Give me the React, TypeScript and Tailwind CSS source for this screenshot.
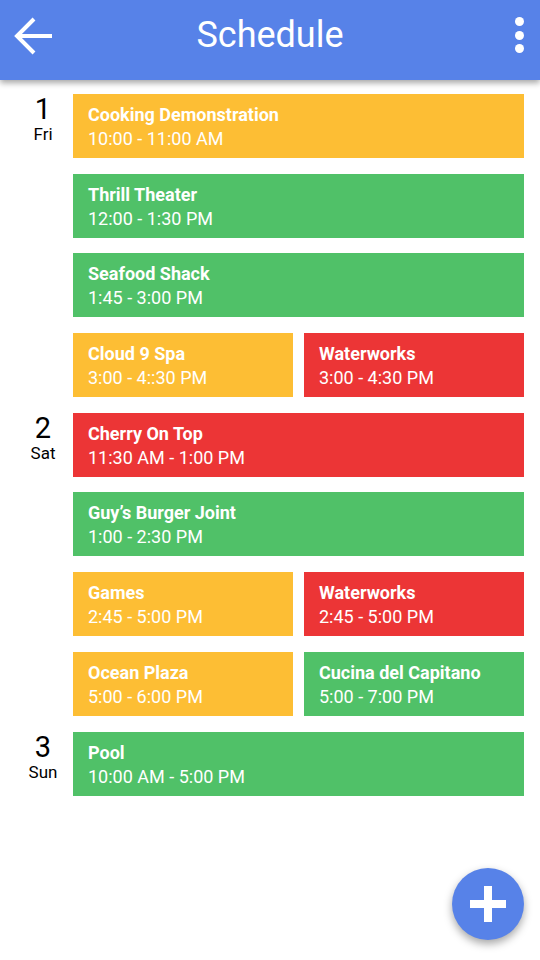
type Ev = { title: string; time: string; color: string }

const Y = 'bg-[#fdbe34]'
const G = 'bg-[#50c168]'
const R = 'bg-[#ec3536]'

const days: { num: string; name: string; rows: Ev[][] }[] = [
  {
    num: '1',
    name: 'Fri',
    rows: [
      [{ title: 'Cooking Demonstration', time: '10:00 - 11:00 AM', color: Y }],
      [{ title: 'Thrill Theater', time: '12:00 - 1:30 PM', color: G }],
      [{ title: 'Seafood Shack', time: '1:45 - 3:00 PM', color: G }],
      [
        { title: 'Cloud 9 Spa', time: '3:00 - 4::30 PM', color: Y },
        { title: 'Waterworks', time: '3:00 - 4:30 PM', color: R },
      ],
    ],
  },
  {
    num: '2',
    name: 'Sat',
    rows: [
      [{ title: 'Cherry On Top', time: '11:30 AM - 1:00 PM', color: R }],
      [{ title: 'Guy’s Burger Joint', time: '1:00 - 2:30 PM', color: G }],
      [
        { title: 'Games', time: '2:45 - 5:00 PM', color: Y },
        { title: 'Waterworks', time: '2:45 - 5:00 PM', color: R },
      ],
      [
        { title: 'Ocean Plaza', time: '5:00 - 6:00 PM', color: Y },
        { title: 'Cucina del Capitano', time: '5:00 - 7:00 PM', color: G },
      ],
    ],
  },
  {
    num: '3',
    name: 'Sun',
    rows: [[{ title: 'Pool', time: '10:00 AM - 5:00 PM', color: G }]],
  },
]

const Card = ({ title, time, color }: Ev) => (
  <div className={`${color} h-16 pl-[15px] pt-[9px] text-white text-[18px] leading-6`}>
    <div className="font-bold">{title}</div>
    <div>{time}</div>
  </div>
)

export default function App() {
  return (
    <div className="relative w-[540px] h-[960px] bg-white overflow-hidden" style={{ fontFamily: 'Roboto, "Noto Sans", sans-serif' }}>
      <header className="relative z-10 h-20 bg-[#5782e8] shadow-[0_3px_6px_rgba(0,0,0,0.35)] flex items-center justify-between pb-[10px] pl-[14px] pr-[16px]">
        <svg width="40" height="40" viewBox="0 0 40 40" className="mt-[2px]">
          <path d="M38 20H4M20 3L3 20l17 17" stroke="white" strokeWidth="4" fill="none" />
        </svg>
        <h1 className="absolute left-0 right-0 top-[11px] text-center text-white text-[36px] leading-[48px]">Schedule</h1>
        <div className="flex flex-col gap-[4.5px]">
          <span className="w-[9px] h-[9px] rounded-full bg-white" />
          <span className="w-[9px] h-[9px] rounded-full bg-white" />
          <span className="w-[9px] h-[9px] rounded-full bg-white" />
        </div>
      </header>

      <main className="pt-[14px] flex flex-col gap-[16px]">
        {days.map((d) => (
          <div key={d.num} className="flex">
            <div className="w-[73px] pl-[13px] flex flex-col items-center text-black">
              <span className="w-[60px] text-center text-[29px] leading-[30px]">{d.num}</span>
              <span className="w-[60px] text-center text-[17px] leading-[20px]">{d.name}</span>
            </div>
            <div className="flex-1 mr-4 flex flex-col gap-[15.6px]">
              {d.rows.map((row, i) =>
                row.length === 1 ? (
                  <Card key={i} {...row[0]} />
                ) : (
                  <div key={i} className="grid grid-cols-2 gap-[11px]">
                    {row.map((e) => (
                      <Card key={e.title} {...e} />
                    ))}
                  </div>
                )
              )}
            </div>
          </div>
        ))}
      </main>

      <button className="absolute left-[452px] top-[868px] w-[72px] h-[72px] rounded-full bg-[#5782e8] shadow-[0_4px_8px_rgba(0,0,0,0.35)] flex items-center justify-center">
        <svg width="36" height="36" viewBox="0 0 36 36">
          <path d="M18 0v36M0 18h36" stroke="white" strokeWidth="8" />
        </svg>
      </button>
    </div>
  )
}
